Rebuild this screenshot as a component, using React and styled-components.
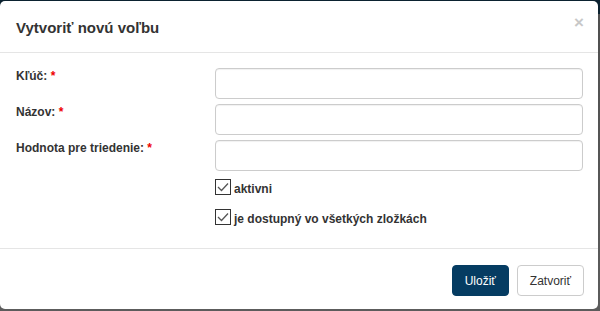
import React from 'react';
import styled, { createGlobalStyle } from 'styled-components';

const Global = createGlobalStyle`
  html, body {
    margin: 0;
    height: 311px;
    overflow: hidden;
    background: linear-gradient(#0b2230 0, #0b2230 14px, #4f4f4f 14px, #5c5c5c 100%);
    font-family: "Liberation Sans", Arial, sans-serif;
  }
`;

const Modal = styled.div`
  background: #fff;
  border-radius: 5px;
  margin: 1px 2px 0 0;
  height: 308px;
  display: flex;
  flex-direction: column;
  color: #333;
`;

const Header = styled.div`
  height: 51px;
  border-bottom: 1px solid #e5e5e5;
  display: flex;
  align-items: center;
  justify-content: space-between;
  padding: 0 16px;
`;

const Title = styled.h4`
  margin: 0;
  font-size: 15px;
  font-weight: bold;
  color: #333;
  padding-top: 1px;
`;

const Close = styled.span`
  font-size: 17px;
  font-weight: bold;
  color: #c8c8c8;
  margin-right: -2px;
  margin-top: -7px;
`;

const Body = styled.div`
  flex: 1;
  padding: 15px 15px 0 16px;
  display: flex;
  flex-direction: column;
  gap: 5px;
`;

const Row = styled.div`
  display: flex;
  align-items: flex-start;
`;

const Label = styled.label`
  width: 199px;
  font-size: 12px;
  font-weight: bold;
  padding-top: 1px;
`;

const Req = styled.span`
  color: #e00;
`;

const Input = styled.input`
  box-sizing: border-box;
  width: 368px;
  height: 31px;
  border: 1px solid #ccc;
  border-radius: 4px;
  box-shadow: inset 0 1px 1px rgba(0,0,0,0.06);
`;

const Checks = styled.div`
  margin-left: 199px;
  padding-top: 3px;
  display: flex;
  flex-direction: column;
  gap: 13px;
`;

const Check = styled.label`
  display: flex;
  align-items: flex-end;
  font-size: 12px;
  font-weight: bold;
  gap: 3px;
`;

const Box = styled.span`
  width: 14px;
  height: 14px;
  border: 1px solid #333;
  display: inline-flex;
  align-items: center;
  justify-content: center;
  margin-bottom: 1px;
`;

const Footer = styled.div`
  border-top: 1px solid #e5e5e5;
  height: 61px;
  box-sizing: border-box;
  display: flex;
  justify-content: flex-end;
  align-items: flex-start;
  padding: 16px 14px 0 0;
  gap: 8px;
`;

const Button = styled.button`
  font-family: "Liberation Sans", Arial, sans-serif;
  font-size: 12px;
  height: 31px;
  padding: 0 12px;
  border-radius: 4px;
  border: 1px solid ${p => (p.primary ? '#053c62' : '#ccc')};
  background: ${p => (p.primary ? '#053c62' : '#fff')};
  color: ${p => (p.primary ? '#fff' : '#333')};
`;

const Tick = () => (
  <svg width="12" height="10" viewBox="0 0 12 10">
    <path d="M1 5 L4.5 8.5 L11 1.5" fill="none" stroke="#555" strokeWidth="1.3" />
  </svg>
);

export default function App() {
  return (
    <>
      <Global />
      <Modal>
        <Header>
          <Title>Vytvoriť novú voľbu</Title>
          <Close>×</Close>
        </Header>
        <Body>
          <Row>
            <Label>Kľúč: <Req>*</Req></Label>
            <Input />
          </Row>
          <Row>
            <Label>Názov: <Req>*</Req></Label>
            <Input />
          </Row>
          <Row>
            <Label>Hodnota pre triedenie: <Req>*</Req></Label>
            <Input />
          </Row>
          <Checks>
            <Check><Box><Tick /></Box>aktivni</Check>
            <Check><Box><Tick /></Box>je dostupný vo všetkých zložkách</Check>
          </Checks>
        </Body>
        <Footer>
          <Button primary>Uložiť</Button>
          <Button>Zatvoriť</Button>
        </Footer>
      </Modal>
    </>
  );
}
